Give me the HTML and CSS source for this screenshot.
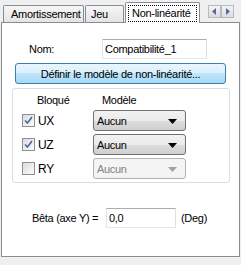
FILE: index.html
```html
<!DOCTYPE html>
<html lang="fr">
<head>
  <meta charset="UTF-8" />
  <title>Non-linéarité</title>
  <link rel="stylesheet" href="styles.css">
</head>
<body>
  <div class="tabbar">
    <div class="tab tab-damping">Amortissement</div>
    <div class="tab tab-gap">Jeu</div>
    <div class="tab active"><span class="focus">Non-linéarité</span></div>
    <div class="spin">
      <span class="spin-btn"><svg width="5" height="7" viewBox="0 0 5 7"><path d="M4 0v7L0 3.5z" fill="#4d6aa8"/></svg></span>
      <span class="spin-btn"><svg width="5" height="7" viewBox="0 0 5 7"><path d="M1 0v7l4-3.5z" fill="#4d6aa8"/></svg></span>
    </div>
  </div>

  <div class="panel">
    <div class="name-row">
      <span class="name-label">Nom:</span>
      <input type="text" class="text-field name-field" value="Compatibilité_1"/>
    </div>

    <button class="define-btn">Définir le modèle de non-linéarité...</button>

    <div class="group">
      <div class="group-head"><span class="col-lock">Bloqué</span><span>Modèle</span></div>

      <div class="dof-row">
        <span class="check"><svg width="9" height="9" viewBox="0 0 9 9"><path d="M1 4.5l2.5 2.5L8 1" fill="none" stroke="#4a67a0" stroke-width="1.6"/></svg></span>
        <span class="dof">UX</span>
        <div class="combo"><span>Aucun</span><svg width="9" height="5" viewBox="0 0 9 5"><path d="M0 0h9L4.5 5z" fill="#000"/></svg></div>
      </div>
      <div class="dof-row">
        <span class="check"><svg width="9" height="9" viewBox="0 0 9 9"><path d="M1 4.5l2.5 2.5L8 1" fill="none" stroke="#4a67a0" stroke-width="1.6"/></svg></span>
        <span class="dof">UZ</span>
        <div class="combo"><span>Aucun</span><svg width="9" height="5" viewBox="0 0 9 5"><path d="M0 0h9L4.5 5z" fill="#000"/></svg></div>
      </div>
      <div class="dof-row">
        <span class="check"></span>
        <span class="dof">RY</span>
        <div class="combo disabled"><span>Aucun</span><svg width="9" height="5" viewBox="0 0 9 5"><path d="M0 0h9L4.5 5z" fill="#a0a0a0"/></svg></div>
      </div>
    </div>

    <div class="beta-row">
      <span class="beta-label">Bêta (axe Y) =</span>
      <input type="text" class="text-field beta-field" value="0,0"/>
      <span class="unit">(Deg)</span>
    </div>
  </div>
</body>
</html>
```

FILE: styles.css
```css
body {
  margin: 0;
  background-color: #eef0ef;
  font-family: "Liberation Sans", Arial, sans-serif;
  font-size: 11px;
  letter-spacing: -0.3px;
  color: #000;
}

.tabbar {
  display: flex;
  align-items: flex-end;
  height: 22px;
  padding-left: 3px;
}
.tab {
  height: 17px;
  line-height: 17px;
  padding: 0 6px;
  margin-right: 1px;
  box-sizing: border-box;
  border: 1px solid #898c95;
  border-bottom: none;
  border-radius: 2px 2px 0 0;
  background: linear-gradient(#f6f6f6, #e4e4e4);
  white-space: nowrap;
}
.tab-damping {
  width: 81px;
  padding-left: 7px;
}
.tab-gap {
  width: 39px;
  padding-left: 5px;
}
.tab.active {
  position: relative;
  z-index: 1;
  width: 75px;
  height: 21px;
  margin-bottom: -1px;
  padding: 2px 2px 0;
  line-height: 15px;
  background: #fff;
}
.focus {
  display: block;
  padding: 0 3px;
  border: 1px dotted #000;
}
.spin {
  display: flex;
  align-self: flex-start;
  margin: 5px 7px 0 auto;
}
.spin-btn {
  width: 13px;
  height: 13px;
  box-sizing: border-box;
  border: 1px solid #b7bac0;
  background: linear-gradient(#f4f4f4, #dcdcdc);
  display: flex;
  align-items: center;
  justify-content: center;
}

.panel {
  margin: 0 1px;
  width: 239px;
  height: 235px;
  box-sizing: border-box;
  border: 1px solid #898c95;
  background-color: #fff;
  padding-top: 16px;
}

.text-field {
  height: 20px;
  box-sizing: border-box;
  padding: 0 2px;
  border: 1px solid;
  border-color: #abadb3 #dbdfe6 #e3e9ef #e2e3ea;
  font: inherit;
  letter-spacing: inherit;
  color: #000;
}

.name-row {
  display: flex;
  align-items: center;
  padding-left: 27px;
}
.name-label {
  width: 73px;
}
.name-field {
  width: 105px;
}

.define-btn {
  display: block;
  margin: 4px 0 0 13px;
  width: 211px;
  height: 21px;
  border: 1px solid #3c7fb1;
  border-radius: 3px;
  background: linear-gradient(#eaf6fd, #d9f0fc 50%, #bee6fd 50%, #a7d9f5);
  font: inherit;
  letter-spacing: inherit;
  color: #000;
  padding: 0;
}

.group {
  margin: 4px 0 0 10px;
  width: 218px;
  height: 95px;
  box-sizing: border-box;
  border: 1px solid #d5dfe5;
  border-radius: 3px;
  padding: 5px 0 0 9px;
}
.group-head {
  display: flex;
  line-height: 13px;
  margin-bottom: 3px;
}
.col-lock {
  width: 65px;
  padding-left: 15px;
}
.dof-row {
  display: flex;
  align-items: center;
  height: 21px;
  margin-bottom: 3px;
}
.check {
  width: 13px;
  height: 13px;
  box-sizing: border-box;
  border: 1px solid #8f8f8f;
  background: linear-gradient(135deg, #dcdcdc, #fbfbfb);
  display: flex;
  align-items: center;
  justify-content: center;
}
.dof {
  width: 55px;
  padding-left: 3px;
  font-size: 12px;
}
.combo {
  width: 93px;
  height: 21px;
  box-sizing: border-box;
  border: 1px solid #707070;
  border-radius: 3px;
  background: linear-gradient(#f2f2f2, #ebebeb 50%, #dddddd 50%, #cfcfcf);
  display: flex;
  align-items: center;
  justify-content: space-between;
  padding: 1px 8px 0 3px;
}
.combo.disabled {
  border-color: #adb2b5;
  background: #f4f4f4;
  color: #838383;
}

.beta-row {
  display: flex;
  align-items: center;
  margin-top: 25px;
  padding-left: 30px;
}
.beta-label {
  width: 74px;
}
.beta-field {
  width: 70px;
}
.unit {
  margin-left: 5px;
}
```
